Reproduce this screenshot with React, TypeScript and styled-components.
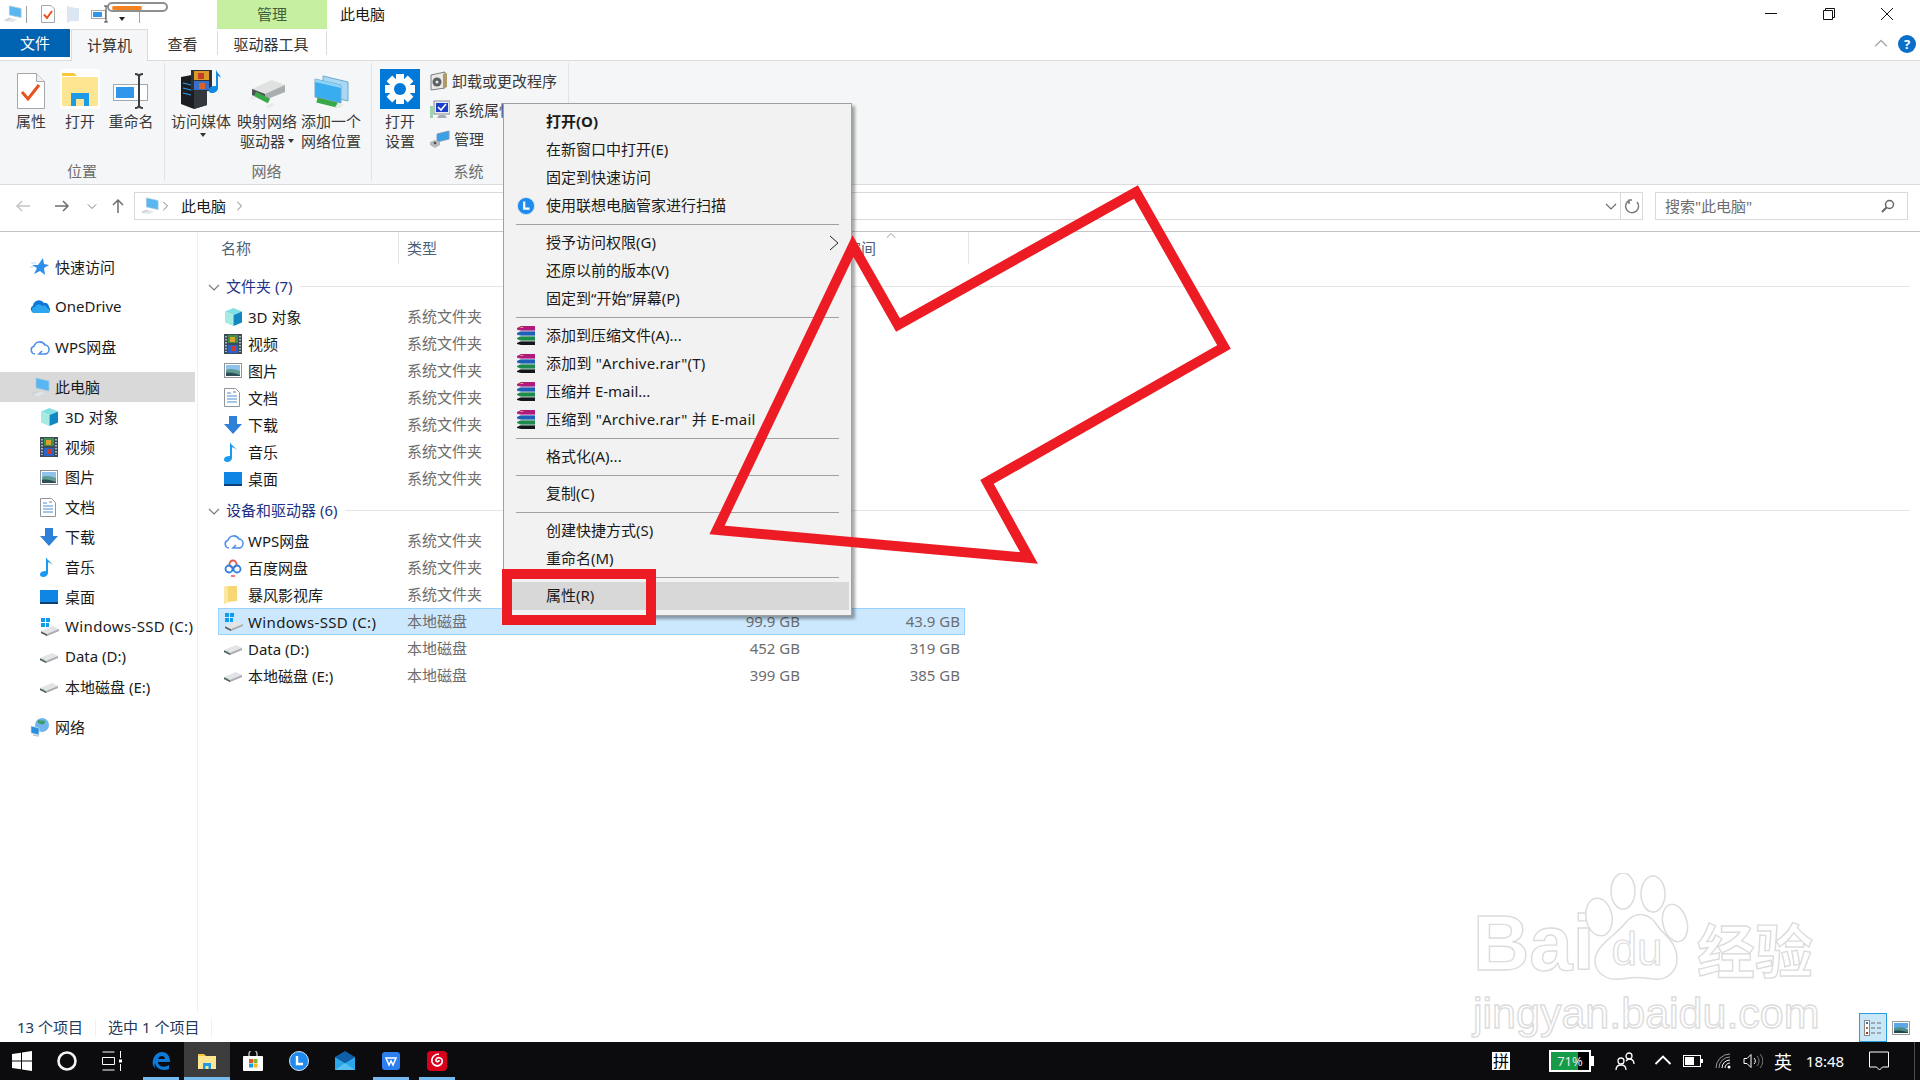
import React from "react";
import styled, { createGlobalStyle } from "styled-components";

const GlobalStyle = createGlobalStyle`
  html, body {
    margin: 0;
    padding: 0;
    width: 1920px;
    height: 1080px;
    overflow: hidden;
    background: #fff;
  }
  * {
    box-sizing: border-box;
  }
`;

const IconPc = ({ size = 20 }: { size?: number }) => (
  <svg width={size} height={size} viewBox="0 0 20 20">
    <path d="M6 1l13 3v10L6 11z" fill="#58b6f0" stroke="#a9c8dc" strokeWidth="0.8" />
    <path d="M0 17l6-3 3 1-6 3z" fill="#cdd2d6" />
    <path d="M3 18l6-3 6 1-6 3z" fill="#e2e5e8" />
  </svg>
);

const IconStar = () => (
  <svg width="20" height="20" viewBox="0 0 20 20">
    <path d="M13 1l1 6 5 1-5 3 1 7-5-4-6 3 3-6-5-3h6z" fill="#2f8fe8" />
    <path d="M1 6h5M0 10h4" stroke="#b7d9f5" strokeWidth="1" />
  </svg>
);

const IconOneDrive = () => (
  <svg width="20" height="14" viewBox="0 0 20 14">
    <path d="M4 13a4 4 0 01-1-7.500A6 6 0 0114 3a4 4 0 015 4 3.500 3.500 0 01-2 6z" fill="#0f78d4" />
    <path d="M5 13a3 3 0 010-6 4 4 0 017-1 3.500 3.500 0 015 2 3 3 0 012 5z" fill="#2ba6ef" />
  </svg>
);

const IconCloud = () => (
  <svg width="20" height="16" viewBox="0 0 20 16">
    <path d="M5 15a4 4 0 01-1-7.800A6 6 0 0115 6a4.500 4.500 0 01-1 9H9l3-3" fill="none" stroke="#4f8fe8" strokeWidth="1.600" />
  </svg>
);

const IconCube = () => (
  <svg width="19" height="20" viewBox="0 0 19 20">
    <path d="M9.500 1L18 4.500 9.500 8 1 4.500z" fill="#7fe0e4" />
    <path d="M1 4.500L9.500 8v11L1 15.500z" fill="#a5ebe2" />
    <path d="M18 4.500L9.500 8v11l8.500-3.500z" fill="#1188c4" />
  </svg>
);

const IconFilm = () => (
  <svg width="18" height="20" viewBox="0 0 18 20">
    <rect width="18" height="20" fill="#3d4a5a" />
    <rect x="4" y="1" width="10" height="8" fill="#3f8f4a" />
    <rect x="6" y="3" width="5" height="5" fill="#d8a22c" />
    <rect x="4" y="11" width="10" height="8" fill="#2a64c8" />
    <rect x="7" y="12" width="5" height="5" fill="#cc3a2a" />
    <path d="M2 2v16M16 2v16" stroke="#cfd6dc" strokeWidth="1.500" strokeDasharray="1.500 1.500" />
  </svg>
);

const IconPicture = () => (
  <svg width="18" height="15" viewBox="0 0 18 15">
    <rect x="0.500" y="0.500" width="17" height="14" fill="#fff" stroke="#8e949a" />
    <rect x="2" y="2" width="14" height="6" fill="#8ec4ec" />
    <path d="M2 7c4-2 9-1 14 1v5H2z" fill="#5f9c92" />
    <path d="M2 10c4-1 9 0 14 2v1H2z" fill="#2e4f58" />
  </svg>
);

const IconDoc = () => (
  <svg width="16" height="19" viewBox="0 0 16 19">
    <path d="M.500.500h11l4 4v14H.500z" fill="#fff" stroke="#8e949a" />
    <path d="M3 5h4M3 8h10M3 11h10M3 14h10" stroke="#4a90d0" strokeWidth="1.200" />
    <path d="M9 4h3" stroke="#8e949a" strokeWidth="1.200" />
  </svg>
);

const IconDownload = () => (
  <svg width="18" height="18" viewBox="0 0 18 18">
    <path d="M5 0h8v8h5l-9 10L0 8h5z" fill="#2f80d8" />
  </svg>
);

const IconMusic = () => (
  <svg width="14" height="20" viewBox="0 0 14 20">
    <path d="M6 0c1 4 7 5 7 10 0-3-3-4-5-5v11c0 2-2 4-5 4-2 0-3-1-3-2.500C0 15 3 14 6 14z" fill="#1b9bf0" />
  </svg>
);

const IconDesktop = () => (
  <svg width="18" height="14" viewBox="0 0 18 14">
    <rect width="18" height="13" fill="#0f85e4" />
    <rect y="12" width="18" height="2" fill="#0a3f78" />
  </svg>
);

const IconDrive = () => (
  <svg width="18" height="12" viewBox="0 0 18 12">
    <path d="M0 7l12-5 6 3v2L6 12 0 9z" fill="#e2e4e6" />
    <path d="M0 7l6 3 12-5v2L6 12 0 9z" fill="#a9adb1" />
    <path d="M0 7.500l6 3v1.500L0 9z" fill="#4f5458" />
    <rect x="2" y="8.500" width="2" height="1" fill="#3fa34d" />
  </svg>
);

const IconWinDrive = () => (
  <svg width="20" height="20" viewBox="0 0 20 20">
    <path d="M1 1h4v4H1zM6 1h4v4H6zM1 6h4v4H1zM6 6h3v4H6z" fill="#0f9bf0" />
    <path d="M1 14l12-5 6 3v2L7 19l-6-3z" fill="#e2e4e6" />
    <path d="M1 14l6 3 12-5v2L7 19l-6-3z" fill="#a9adb1" />
    <path d="M1 14.500l6 3V19l-6-3z" fill="#4f5458" />
  </svg>
);

const IconGlobe = () => (
  <svg width="20" height="20" viewBox="0 0 20 20">
    <circle cx="12" cy="8" r="7" fill="#6fb6ea" />
    <path d="M8 3c3 1 5 0 7 1 1 3-3 4-5 3S7 5 8 3z" fill="#3f9a6e" />
    <path d="M1 9l8 2v7l-8-2z" fill="#2a8fe0" stroke="#cfe3f2" strokeWidth="0.700" />
    <path d="M3 18l6 1" stroke="#c4c8cc" strokeWidth="1.500" />
  </svg>
);

const IconBaidu = () => (
  <svg width="18" height="20" viewBox="0 0 18 20">
    <circle cx="9" cy="6" r="3.500" fill="none" stroke="#e6544f" strokeWidth="1.800" />
    <circle cx="5" cy="11" r="3.500" fill="none" stroke="#2b7fe0" strokeWidth="1.800" />
    <circle cx="13" cy="11" r="3.500" fill="none" stroke="#2b7fe0" strokeWidth="1.800" />
    <path d="M7 18h4" stroke="#e6544f" strokeWidth="1.500" />
  </svg>
);

const IconFolder = () => (
  <svg width="14" height="18" viewBox="0 0 14 18">
    <path d="M0 1l6-1h7v15l-9 1-4 2z" fill="#f7d774" />
    <path d="M0 1l4 1v14l-4 2z" fill="#fbe7a4" />
  </svg>
);

const IconWinrar = () => (
  <svg width="20" height="20" viewBox="0 0 20 20">
    <path d="M1 2l4-2h14v5H5L1 4z" fill="#b01a7c" />
    <path d="M3 1l3 1 2-1z" fill="#e8c850" />
    <path d="M1 7l4-2h14v5H5L1 9z" fill="#1f5fb8" />
    <path d="M1 12l4-2h14v5H5l-4-2z" fill="#1e8a4c" />
    <path d="M1 17l4-2h14v4H5l-4-1z" fill="#14161a" />
    <path d="M1 4l4 1h14M1 9l4 1h14M1 14l4 1h14" stroke="#e8ecf0" strokeWidth="0.800" fill="none" />
  </svg>
);

const IconLenovo = ({ size = 18 }: { size?: number }) => (
  <svg width={size} height={size} viewBox="0 0 20 20">
    <circle cx="10" cy="10" r="9.500" fill="#1f8bec" stroke="#d5e6f5" />
    <path d="M8 5v8h6" fill="none" stroke="#fff" strokeWidth="2.400" />
  </svg>
);

const IconRibbonProps = () => (
  <svg width="28" height="36" viewBox="0 0 28 36">
    <path d="M.500.500h19l8 8v27H.500z" fill="#fff" stroke="#a4a8ac" />
    <path d="M19.500.500v8h8" fill="#f0f0f0" stroke="#a4a8ac" />
    <path d="M5 19l6 7 11-14" fill="none" stroke="#e8511c" strokeWidth="3" />
  </svg>
);

const IconRibbonOpen = () => (
  <svg width="40" height="40" viewBox="0 0 40 40">
    <rect width="40" height="40" fill="#fff" />
    <path d="M2 4h12l3 3h-15z" fill="#f8c83c" />
    <rect x="2" y="8" width="36" height="29" fill="#fde592" />
    <path d="M11 37V24h18v13h-5v-7h-8v7z" fill="#1e9be8" />
    <rect x="11" y="24" width="18" height="3" fill="#1e9be8" />
  </svg>
);

const IconRibbonRename = () => (
  <svg width="36" height="36" viewBox="0 0 36 36">
    <rect x="0.500" y="11.500" width="34" height="16" fill="#fff" stroke="#a4a8ac" />
    <rect x="3" y="14" width="18" height="11" fill="#2f96ec" />
    <path d="M22 1c2 0 4 1 4 3v28c0 2-2 3-4 3M30 1c-2 0-4 1-4 3v28c0 2 2 3 4 3" fill="none" stroke="#3c3f42" strokeWidth="2" />
  </svg>
);

const IconRibbonMedia = () => (
  <svg width="42" height="40" viewBox="0 0 42 40">
    <path d="M1 8l16-3 10 6v25l-13 4-13-5z" fill="#1a1d22" />
    <path d="M14 12l13-1v25l-13 4z" fill="#33383f" />
    <path d="M3 14l8 2M3 19l8 2M3 24l8 2" stroke="#2f9be8" strokeWidth="1.200" />
    <rect x="11" y="1" width="21" height="21" fill="#2d3238" />
    <rect x="14" y="2" width="15" height="9" fill="#d89b2a" />
    <rect x="14" y="12" width="15" height="9" fill="#3a70c8" />
    <rect x="18" y="4" width="6" height="6" fill="#c83a2a" />
    <rect x="19" y="14" width="6" height="6" fill="#d8622a" />
    <path d="M36 0c0 4 5 5 5 10 0-2-2-3-3-3v12c0 3-3 5-6 5s-4-2-3-4c1-3 4-3 7-3z" fill="#0f8ce0" />
  </svg>
);

const IconRibbonDrive = () => (
  <svg width="40" height="30" viewBox="0 0 40 30">
    <path d="M5 10l20-9 13 5v7L18 21 5 16z" fill="#dfe2e0" />
    <path d="M5 10l13 5 20-9v7L18 21 5 16z" fill="#a9aeb0" />
    <path d="M5 10l13 5v6L5 16z" fill="#4c5154" />
    <path d="M8 15l14 7" stroke="#39a84a" strokeWidth="5" />
    <path d="M25 24l3 2-6 3-3-2z" fill="#e8ece8" />
    <path d="M2 19l3 2 5-2-3-2z" fill="#e8ece8" />
  </svg>
);

const IconRibbonNetwork = () => (
  <svg width="36" height="34" viewBox="0 0 36 34">
    <path d="M10 1l25 6v19l-25-6z" fill="#a8d8f4" stroke="#6ea8cc" />
    <path d="M2 4l26 6v18L2 22z" fill="#38aef0" stroke="#6ea8cc" />
    <path d="M2 4l26 6v3L2 7z" fill="#8fd4f8" />
    <path d="M4 25l20 5" stroke="#39a84a" strokeWidth="5" />
    <path d="M25 28l6 2-4 3-5-1z" fill="#e6eae6" />
  </svg>
);

const IconRibbonGear = () => (
  <svg width="40" height="40" viewBox="0 0 40 40">
    <rect width="40" height="40" fill="#0078d7" />
    <circle cx="20" cy="20" r="11" fill="#fff" />
    {[0, 45, 90, 135].map((a) => (
      <rect key={a} x="16" y="5" width="8" height="30" fill="#fff" transform={`rotate(${a} 20 20)`} />
    ))}
    <circle cx="20" cy="20" r="6" fill="#0078d7" />
  </svg>
);

const IconSmallUninstall = () => (
  <svg width="18" height="20" viewBox="0 0 18 20">
    <path d="M1 4l14-3v16L1 19z" fill="#e8e8e4" stroke="#7a7e80" />
    <circle cx="7" cy="11" r="4.500" fill="#5a6064" />
    <circle cx="7" cy="11" r="1.500" fill="#e8e8e4" />
    <path d="M13 3l4-1v14l-4 1z" fill="#b09a68" />
  </svg>
);

const IconSmallSysProps = () => (
  <svg width="20" height="20" viewBox="0 0 20 20">
    <rect x="0" y="6" width="3" height="12" fill="#9fd4a8" />
    <rect x="4" y="1" width="16" height="13" fill="#e8eaec" stroke="#8a9298" />
    <rect x="6" y="3" width="12" height="9" fill="#1c3fc8" />
    <path d="M8 7l3 3 5-6" fill="none" stroke="#fff" strokeWidth="1.600" />
    <path d="M9 15h6l2 3H7z" fill="#a8aeb4" />
  </svg>
);

const IconSmallManage = () => (
  <svg width="20" height="18" viewBox="0 0 20 18">
    <path d="M7 4l12-3v8L7 12z" fill="#38a0e8" stroke="#7a9cb8" />
    <path d="M0 12l5-2 5 2v3l-5 3-5-3z" fill="#b6babc" />
    <circle cx="5" cy="13" r="1.300" fill="#4a4e50" />
  </svg>
);

const Chevron = ({ dir, color = "#7a7a7a", size = 12 }: { dir: "up" | "down" | "right"; color?: string; size?: number }) => {
  const paths = { up: "M1 8l5-5 5 5", down: "M1 4l5 5 5-5", right: "M4 1l5 5-5 5" };
  return (
    <svg width={size} height={size} viewBox="0 0 12 12">
      <path d={paths[dir]} fill="none" stroke={color} strokeWidth="1.200" />
    </svg>
  );
};

const Arrow = ({ dir, color }: { dir: "left" | "right" | "up"; color: string }) => {
  const paths = {
    left: "M15 8H2M7 3L2 8l5 5",
    right: "M1 8h13M9 3l5 5-5 5",
    up: "M8 15V2M3 7l5-5 5 5",
  };
  return (
    <svg width="16" height="16" viewBox="0 0 16 16">
      <path d={paths[dir]} fill="none" stroke={color} strokeWidth="1.500" />
    </svg>
  );
};

const TaskIcons: Record<string, React.ReactNode> = {
  start: (
    <svg width="20" height="20" viewBox="0 0 20 20">
      <path d="M0 3l9-1.300V9.500H0zM10 1.500L20 0v9.500H10zM0 10.500h9v7.800L0 17zM10 10.500h10V20l-10-1.500z" fill="#fff" />
    </svg>
  ),
  cortana: (
    <svg width="20" height="20" viewBox="0 0 20 20">
      <circle cx="10" cy="10" r="8.500" fill="none" stroke="#f4f4f4" strokeWidth="2.600" />
    </svg>
  ),
  taskview: (
    <svg width="20" height="20" viewBox="0 0 20 20">
      <path d="M0.500 1h12M0.500 19h12M0.500 6.500h12v7h-12zM18.500 0v7M18.500 13v7" fill="none" stroke="#fff" strokeWidth="1" />
      <rect x="17" y="8.500" width="3" height="3" fill="#fff" />
    </svg>
  ),
  edge: (
    <svg width="18" height="18" viewBox="0 0 18 18">
      <path d="M1 8C2 3 6 0 10 0c5 0 8 4 8 10H6c0 5 7 6 11 3v4c-5 2-13 1-14-6-1 3 0 5 1 6-3-2-4-5-3-9zM6 7h7c0-4-6-4-7 0z" fill="#0c7ad8" />
    </svg>
  ),
  explorer: (
    <svg width="18" height="18" viewBox="0 0 18 18">
      <path d="M0 2h6l2 2H0z" fill="#f8c83c" />
      <rect y="4" width="18" height="13" fill="#fde592" />
      <path d="M5 17v-6h8v6h-2.500v-3h-3v3z" fill="#1e9be8" />
    </svg>
  ),
  store: (
    <svg width="20" height="20" viewBox="0 0 20 20">
      <path d="M6 5V3a4 4 0 018 0v2" fill="none" stroke="#b8b8b8" strokeWidth="1.500" />
      <rect y="5" width="20" height="15" rx="1" fill="#fff" />
      <rect x="6" y="8" width="4" height="4" fill="#e8532a" />
      <rect x="10.500" y="8" width="4" height="4" fill="#7db92a" />
      <rect x="6" y="12.500" width="4" height="4" fill="#10a0e8" />
      <rect x="10.500" y="12.500" width="4" height="4" fill="#f8b818" />
    </svg>
  ),
  clock: <IconLenovo size={20} />,
  mail: (
    <svg width="20" height="20" viewBox="0 0 20 20">
      <path d="M0 6l10-6 10 6-10 6z" fill="#0f5ea8" />
      <path d="M0 6l10 6 10-6v13H0z" fill="#2ba6ea" />
      <path d="M0 19l10-7 10 7z" fill="#58c0f0" />
    </svg>
  ),
  wps: (
    <svg width="18" height="18" viewBox="0 0 18 18">
      <rect width="18" height="18" rx="3" fill="#2b7ff0" />
      <path d="M4 6h10l-3 7-2-4-2 4z" fill="none" stroke="#fff" strokeWidth="1.500" />
    </svg>
  ),
  netease: (
    <svg width="20" height="20" viewBox="0 0 20 20">
      <rect width="20" height="20" rx="4" fill="#d8001a" />
      <path d="M12 3c-5 0-8 4-7 8 1 3 5 5 8 3 3-2 3-6 0-7-2-1-5 1-4 3 1 1 3 1 3-1" fill="none" stroke="#fff" strokeWidth="1.700" />
    </svg>
  ),
};

interface NavItem {
  label: string;
  icon: React.ReactNode;
  level: 1 | 2;
  selected?: boolean;
  spaced?: boolean;
  wide?: boolean;
}

const NAV_ITEMS: NavItem[] = [
  { label: "快速访问", icon: <IconStar />, level: 1 },
  { label: "OneDrive", icon: <IconOneDrive />, level: 1, spaced: true },
  { label: "WPS网盘", icon: <IconCloud />, level: 1, spaced: true },
  { label: "此电脑", icon: <IconPc />, level: 1, selected: true, spaced: true },
  { label: "3D 对象", icon: <IconCube />, level: 2 },
  { label: "视频", icon: <IconFilm />, level: 2 },
  { label: "图片", icon: <IconPicture />, level: 2 },
  { label: "文档", icon: <IconDoc />, level: 2 },
  { label: "下载", icon: <IconDownload />, level: 2 },
  { label: "音乐", icon: <IconMusic />, level: 2 },
  { label: "桌面", icon: <IconDesktop />, level: 2 },
  { label: "Windows-SSD (C:)", icon: <IconWinDrive />, level: 2, wide: true },
  { label: "Data (D:)", icon: <IconDrive />, level: 2 },
  { label: "本地磁盘 (E:)", icon: <IconDrive />, level: 2 },
  { label: "网络", icon: <IconGlobe />, level: 1, spaced: true },
];

interface FileRowData {
  name: string;
  icon: React.ReactNode;
  type: string;
  total?: string;
  free?: string;
  selected?: boolean;
  wide?: boolean;
}

const FOLDERS: FileRowData[] = [
  { name: "3D 对象", icon: <IconCube />, type: "系统文件夹" },
  { name: "视频", icon: <IconFilm />, type: "系统文件夹" },
  { name: "图片", icon: <IconPicture />, type: "系统文件夹" },
  { name: "文档", icon: <IconDoc />, type: "系统文件夹" },
  { name: "下载", icon: <IconDownload />, type: "系统文件夹" },
  { name: "音乐", icon: <IconMusic />, type: "系统文件夹" },
  { name: "桌面", icon: <IconDesktop />, type: "系统文件夹" },
];

const DEVICES: FileRowData[] = [
  { name: "WPS网盘", icon: <IconCloud />, type: "系统文件夹" },
  { name: "百度网盘", icon: <IconBaidu />, type: "系统文件夹" },
  { name: "暴风影视库", icon: <IconFolder />, type: "系统文件夹" },
  { name: "Windows-SSD (C:)", icon: <IconWinDrive />, type: "本地磁盘", total: "99.9 GB", free: "43.9 GB", selected: true, wide: true },
  { name: "Data (D:)", icon: <IconDrive />, type: "本地磁盘", total: "452 GB", free: "319 GB" },
  { name: "本地磁盘 (E:)", icon: <IconDrive />, type: "本地磁盘", total: "399 GB", free: "385 GB" },
];

type MenuEntry = { label: string; icon?: React.ReactNode; bold?: boolean; sub?: boolean; active?: boolean; wide?: boolean } | "sep";

const MENU: MenuEntry[] = [
  { label: "打开(O)", bold: true },
  { label: "在新窗口中打开(E)" },
  { label: "固定到快速访问" },
  { label: "使用联想电脑管家进行扫描", icon: <IconLenovo /> },
  "sep",
  { label: "授予访问权限(G)", sub: true },
  { label: "还原以前的版本(V)" },
  { label: "固定到“开始”屏幕(P)" },
  "sep",
  { label: "添加到压缩文件(A)...", icon: <IconWinrar /> },
  { label: "添加到 \"Archive.rar\"(T)", icon: <IconWinrar />, wide: true },
  { label: "压缩并 E-mail...", icon: <IconWinrar /> },
  { label: "压缩到 \"Archive.rar\" 并 E-mail", icon: <IconWinrar />, wide: true },
  "sep",
  { label: "格式化(A)..." },
  "sep",
  { label: "复制(C)" },
  "sep",
  { label: "创建快捷方式(S)" },
  { label: "重命名(M)" },
  "sep",
  { label: "属性(R)", active: true },
];

const TASKS = [
  { id: "start", w: 44 },
  { id: "cortana", w: 46 },
  { id: "taskview", w: 44 },
  { id: "edge", w: 46, ml: 4, running: true },
  { id: "explorer", w: 46, running: true, current: true },
  { id: "store", w: 46 },
  { id: "clock", w: 46 },
  { id: "mail", w: 46 },
  { id: "wps", w: 46, running: true },
  { id: "netease", w: 46, running: true },
];

function FileRow({ row }: { row: FileRowData }) {
  return (
    <Row $selected={row.selected}>
      <RowName $wide={row.wide}>
        <RowIcon>{row.icon}</RowIcon>
        {row.name}
      </RowName>
      <RowMuted>{row.type}</RowMuted>
      <RowNumber>{row.total}</RowNumber>
      <RowNumber>{row.free}</RowNumber>
    </Row>
  );
}

function App() {
  return (
    <Page>
      <GlobalStyle />
      <TitleBar>
        <QuickAccess>
          <IconPc size={18} />
          <QatDivider />
          <QatIcon $ml={14}>
            <svg width="14" height="18" viewBox="0 0 28 36">
              <path d="M1 1h19l7 7v27H1z" fill="#fff" stroke="#a4a8ac" strokeWidth="2" />
              <path d="M6 19l6 7 10-14" fill="none" stroke="#e8511c" strokeWidth="4" />
            </svg>
          </QatIcon>
          <QatIcon $ml={12}>
            <svg width="12" height="18" viewBox="0 0 12 18">
              <path d="M0 1l8 2h4v13H4l-4 2z" fill="#dbe6f2" />
            </svg>
          </QatIcon>
          <QatIcon $ml={12}>
            <svg width="18" height="18" viewBox="0 0 18 18">
              <rect x="0.500" y="5.500" width="14" height="8" fill="#fff" stroke="#a4a8ac" />
              <rect x="2" y="7" width="9" height="5" fill="#2f96ec" />
              <path d="M15 1v16M13 1h4M13 17h4" stroke="#3c3f42" fill="none" />
            </svg>
          </QatIcon>
          <QatCaret />
          <QatDivider $ml={14} />
        </QuickAccess>
        <ManageTab>管理</ManageTab>
        <WindowTitle>此电脑</WindowTitle>
        <WindowControls>
          <WindowButton>
            <svg width="14" height="14" viewBox="0 0 14 14">
              <path d="M1 6.500h12" stroke="#111" />
            </svg>
          </WindowButton>
          <WindowButton>
            <svg width="14" height="14" viewBox="0 0 14 14">
              <path d="M1.500 3.500h9v9h-9zM3.500 3.500v-2h9v9h-2" fill="none" stroke="#111" />
            </svg>
          </WindowButton>
          <WindowButton>
            <svg width="14" height="14" viewBox="0 0 14 14">
              <path d="M1 1l12 12M13 1L1 13" stroke="#111" />
            </svg>
          </WindowButton>
        </WindowControls>
      </TitleBar>

      <TabRow>
        <FileTab>文件</FileTab>
        <ActiveTab>计算机</ActiveTab>
        <PlainTab>查看</PlainTab>
        <ToolTab>驱动器工具</ToolTab>
        <TabRight>
          <Chevron dir="up" color="#a8a8a8" size={14} />
          <HelpDot>?</HelpDot>
        </TabRight>
      </TabRow>

      <Ribbon>
        <RibbonGroup $w={165} $pl={6}>
          <GroupBody>
            <BigButton $w={50}>
              <BigIcon><IconRibbonProps /></BigIcon>
              <BigLabel>属性</BigLabel>
            </BigButton>
            <BigButton $w={48}>
              <BigIcon><IconRibbonOpen /></BigIcon>
              <BigLabel>打开</BigLabel>
            </BigButton>
            <BigButton $w={54}>
              <BigIcon><IconRibbonRename /></BigIcon>
              <BigLabel>重命名</BigLabel>
            </BigButton>
          </GroupBody>
          <GroupLabel>位置</GroupLabel>
        </RibbonGroup>
        <RibbonGroup $w={207} $pl={3}>
          <GroupBody>
            <BigButton $w={66}>
              <BigIcon><IconRibbonMedia /></BigIcon>
              <BigLabel>访问媒体</BigLabel>
              <CaretLine><DropCaret $ml={4} /></CaretLine>
            </BigButton>
            <BigButton $w={66}>
              <BigIcon><IconRibbonDrive /></BigIcon>
              <BigLabel>映射网络</BigLabel>
              <BigLabel>驱动器<DropCaret $ml={3} /></BigLabel>
            </BigButton>
            <BigButton $w={62}>
              <BigIcon><IconRibbonNetwork /></BigIcon>
              <BigLabel>添加一个</BigLabel>
              <BigLabel>网络位置</BigLabel>
            </BigButton>
          </GroupBody>
          <GroupLabel>网络</GroupLabel>
        </RibbonGroup>
        <RibbonGroup $w={197} $pl={3}>
          <GroupBody>
            <BigButton $w={50}>
              <BigIcon><IconRibbonGear /></BigIcon>
              <BigLabel>打开</BigLabel>
              <BigLabel>设置</BigLabel>
            </BigButton>
            <SmallColumn>
              <SmallButton><IconSmallUninstall />卸载或更改程序</SmallButton>
              <SmallButton><IconSmallSysProps />系统属性</SmallButton>
              <SmallButton><IconSmallManage />管理</SmallButton>
            </SmallColumn>
          </GroupBody>
          <GroupLabel>系统</GroupLabel>
        </RibbonGroup>
      </Ribbon>

      <AddressBar>
        <AddressNav $w={30} $ml={8}><Arrow dir="left" color="#c4c4c4" /></AddressNav>
        <AddressNav $w={48}><Arrow dir="right" color="#6d6d6d" /></AddressNav>
        <AddressNav $w={12}><Chevron dir="down" size={10} /></AddressNav>
        <AddressNav $w={28} $ml={6}><Arrow dir="up" color="#6d6d6d" /></AddressNav>
        <AddressBox>
          <IconPc size={18} />
          <Crumb><Chevron dir="right" size={10} /></Crumb>
          <CrumbText>此电脑</CrumbText>
          <Crumb><Chevron dir="right" size={10} /></Crumb>
          <AddressTools>
            <Chevron dir="down" color="#6d6d6d" size={12} />
            <RefreshCell>
              <svg width="16" height="16" viewBox="0 0 16 16">
                <path d="M5 2.500a6.500 6.500 0 108 1.500M8 2H4.500M5 2.500V6" fill="none" stroke="#7a7a7a" strokeWidth="1.500" />
              </svg>
            </RefreshCell>
          </AddressTools>
        </AddressBox>
        <SearchBox>
          <SearchText>搜索"此电脑"</SearchText>
          <SearchGlass>
            <svg width="14" height="14" viewBox="0 0 14 14">
              <circle cx="8.500" cy="5.500" r="4" fill="none" stroke="#666" strokeWidth="1.500" />
              <path d="M5.500 8.500L1 13" stroke="#666" strokeWidth="2" />
            </svg>
          </SearchGlass>
        </SearchBox>
      </AddressBar>

      <Main>
        <NavPane>
          {NAV_ITEMS.map((item) => (
            <NavRow key={item.label + item.level} $level={item.level} $selected={item.selected} $spaced={item.spaced} $wide={item.wide}>
              <NavIcon>{item.icon}</NavIcon>
              <NavLabel>{item.label}</NavLabel>
            </NavRow>
          ))}
        </NavPane>
        <ContentPane>
          <HeaderRow>
            <HeaderCell $w={181} $divided>名称</HeaderCell>
            <HeaderCell $w={100} $pl={8}>类型</HeaderCell>
            <HeaderCell $w={200} $pl={8} />
            <HeaderCell $w={270} $align="right" $pr={92} $divided>
              可用空间
              <SortCaret><Chevron dir="up" size={10} color="#9a9a9a" /></SortCaret>
            </HeaderCell>
          </HeaderRow>
          <Group $mt={6}>
            <GroupHeader>
              <Chevron dir="down" color="#7a7a7a" />
              <GroupTitle>文件夹 (7)</GroupTitle>
              <GroupLine />
            </GroupHeader>
            {FOLDERS.map((row) => <FileRow key={row.name} row={row} />)}
          </Group>
          <Group $mt={2}>
            <GroupHeader>
              <Chevron dir="down" color="#7a7a7a" />
              <GroupTitle>设备和驱动器 (6)</GroupTitle>
              <GroupLine />
            </GroupHeader>
            {DEVICES.map((row) => <FileRow key={row.name} row={row} />)}
          </Group>
        </ContentPane>
      </Main>

      <StatusBar>
        <StatusItem>13 个项目</StatusItem>
        <StatusItem>选中 1 个项目</StatusItem>
        <ViewButtons>
          <ViewButton $active>
            <svg width="18" height="16" viewBox="0 0 18 16">
              <rect x="0.500" y="0.500" width="5" height="15" fill="#fff" stroke="#8a8a8a" />
              <rect x="2" y="2" width="2" height="2" fill="#3a6aa8" />
              <rect x="2" y="7" width="2" height="2" fill="#b07a20" />
              <rect x="2" y="12" width="2" height="2" fill="#b03020" />
              <path d="M7 3h4M13 3h4M7 8h4M13 8h4M7 13h4M13 13h4" stroke="#6d6d6d" />
            </svg>
          </ViewButton>
          <ViewButton>
            <svg width="18" height="14" viewBox="0 0 18 14">
              <rect x="0.500" y="0.500" width="17" height="13" fill="#fff" stroke="#9a9a9a" />
              <rect x="2" y="2" width="14" height="5" fill="#5aa8e8" />
              <path d="M2 7c4-1 9-1 14 1v4H2z" fill="#4f8f88" />
              <path d="M2 10c4-1 9 0 14 1v1H2z" fill="#23464f" />
            </svg>
          </ViewButton>
        </ViewButtons>
      </StatusBar>

      <Taskbar>
        {TASKS.map((t) => (
          <TaskSlot key={t.id} $w={t.w} $ml={t.ml} $running={t.running} $current={t.current}>
            {TaskIcons[t.id]}
          </TaskSlot>
        ))}
        <Tray>
          <TraySlot $w={42}><ImeBox>拼</ImeBox></TraySlot>
          <TraySlot $w={48} $ml={24}>
            <BatteryMeter>
              <BatteryFill $pct={71} />
              <BatteryText>71%</BatteryText>
            </BatteryMeter>
          </TraySlot>
          <TraySlot $w={46} $ml={8}>
            <svg width="20" height="20" viewBox="0 0 20 20">
              <circle cx="14" cy="5" r="3" fill="none" stroke="#fff" strokeWidth="1.300" />
              <circle cx="6" cy="10" r="3" fill="none" stroke="#fff" strokeWidth="1.300" />
              <path d="M1 19c0-3 2-5 5-5s5 2 5 5M11 10c1-1 2-2 3-2 3 0 5 2 5 5" fill="none" stroke="#fff" strokeWidth="1.300" />
            </svg>
          </TraySlot>
          <TraySlot $w={30}><Chevron dir="up" color="#fff" size={18} /></TraySlot>
          <TraySlot $w={30}>
            <svg width="20" height="12" viewBox="0 0 20 12">
              <rect x="0.500" y="0.500" width="17" height="11" fill="none" stroke="#fff" />
              <rect x="2" y="2" width="9" height="8" fill="#fff" />
              <rect x="18" y="4" width="2" height="4" fill="#fff" />
            </svg>
          </TraySlot>
          <TraySlot $w={30}>
            <svg width="16" height="16" viewBox="0 0 16 16">
              <path d="M1 15a14 14 0 0114-14M4 15a11 11 0 0111-11" fill="none" stroke="#9a9a9a" />
              <path d="M7 15a8 8 0 018-8M10 15a5 5 0 015-5" fill="none" stroke="#fff" />
              <circle cx="14" cy="14" r="1.500" fill="#fff" />
            </svg>
          </TraySlot>
          <TraySlot $w={30}>
            <svg width="20" height="16" viewBox="0 0 20 16">
              <path d="M1 5.500h3l4-4v13l-4-4H1z" fill="none" stroke="#fff" />
              <path d="M11 5a4 4 0 010 6" fill="none" stroke="#fff" />
              <path d="M14 3a7 7 0 010 10M17 1a10 10 0 010 14" fill="none" stroke="#777" />
            </svg>
          </TraySlot>
          <TraySlot $w={30}><TrayText $size={18}>英</TrayText></TraySlot>
          <TraySlot $w={54}><TrayText $size={15}>18:48</TrayText></TraySlot>
          <TraySlot $w={54}>
            <svg width="20" height="20" viewBox="0 0 20 20">
              <path d="M.500 1h19v15h-6l-3 3-3-3h-7z" fill="none" stroke="#fff" />
            </svg>
          </TraySlot>
          <TrayEdge />
        </Tray>
      </Taskbar>

      <ContextMenu>
        {MENU.map((entry, i) =>
          entry === "sep" ? (
            <MenuSeparator key={i} />
          ) : (
            <MenuItem key={i} $bold={entry.bold} $active={entry.active}>
              <MenuIcon>{entry.icon}</MenuIcon>
              <MenuLabel $wide={entry.wide}>{entry.label}</MenuLabel>
              {entry.sub && (
                <MenuSub>
                  <svg width="10" height="16" viewBox="0 0 10 16">
                    <path d="M1 1l8 7-8 7" fill="none" stroke="#222" />
                  </svg>
                </MenuSub>
              )}
            </MenuItem>
          ),
        )}
      </ContextMenu>

      <Annotation width="1920" height="1080" viewBox="0 0 1920 1080">
        <polygon
          points="1136,192 1224,347 987,482 1029,558 717,530 853,246 898,325"
          fill="none"
          stroke="#ed1c24"
          strokeWidth="10"
          strokeMiterlimit="12"
        />
      </Annotation>
      <RedBox />
      <OrangePill>
        <OrangeBar />
      </OrangePill>

      <Watermark>
        <WatermarkTop>
          <WatermarkBig>Bai</WatermarkBig>
          <svg width="112" height="112" viewBox="0 0 112 112">
            <g fill="#fff" stroke="#dcdcdc" strokeWidth="1.500">
              <ellipse cx="14" cy="44" rx="13" ry="19" transform="rotate(-10 14 44)" />
              <ellipse cx="38" cy="18" rx="12" ry="18" />
              <ellipse cx="68" cy="21" rx="12" ry="18" />
              <ellipse cx="90" cy="50" rx="12" ry="19" transform="rotate(-15 90 50)" />
              <path d="M42 48c10-10 22-8 30 4 6 10 20 16 20 34 0 14-12 22-24 20-10-2-22-2-32 0-14 2-26-6-26-18 0-16 20-24 32-40z" />
            </g>
            <WatermarkDu x="52" y="92" textAnchor="middle">du</WatermarkDu>
          </svg>
          <WatermarkCn>经验</WatermarkCn>
        </WatermarkTop>
        <WatermarkUrl>jingyan.baidu.com</WatermarkUrl>
      </Watermark>
    </Page>
  );
}

export default App;

const Page = styled.div`
  position: relative;
  width: 1920px;
  height: 1080px;
  display: flex;
  flex-direction: column;
  overflow: hidden;
  background: #fff;
  font-family: "Noto Sans", "Noto Sans CJK SC", sans-serif;
  font-size: 15px;
  color: #1a1a1a;
`;

const TitleBar = styled.div`
  height: 29px;
  display: flex;
  align-items: stretch;
  flex-shrink: 0;
`;

const QuickAccess = styled.div`
  width: 217px;
  padding: 5px 0 0 4px;
  display: flex;
  align-items: flex-start;
`;

const QatDivider = styled.div<{ $ml?: number }>`
  width: 1px;
  height: 17px;
  margin: 1px 0 0 ${(p) => p.$ml ?? 4}px;
  background: #a0a0a0;
`;

const QatIcon = styled.div<{ $ml: number }>`
  margin-left: ${(p) => p.$ml}px;
  height: 18px;
`;

const QatCaret = styled.div`
  width: 0;
  height: 0;
  margin: 12px 0 0 10px;
  border-left: 3px solid transparent;
  border-right: 3px solid transparent;
  border-top: 4px solid #222;
`;

const ManageTab = styled.div`
  width: 110px;
  background: #c6f09f;
  color: #3f5f3a;
  display: flex;
  align-items: center;
  justify-content: center;
  padding-bottom: 2px;
`;

const WindowTitle = styled.div`
  margin-left: 13px;
  line-height: 29px;
`;

const WindowControls = styled.div`
  margin-left: auto;
  display: flex;
  padding: 7px 26px 0 0;
  gap: 44px;
`;

const WindowButton = styled.div`
  width: 14px;
  height: 14px;
  line-height: 0;
`;

const TabRow = styled.div`
  height: 32px;
  flex-shrink: 0;
  display: flex;
  align-items: stretch;
  border-bottom: 1px solid #dadbdc;
`;

const FileTab = styled.div`
  width: 70px;
  height: 28px;
  padding-bottom: 1px;
  background: #0063b1;
  color: #fff;
  display: flex;
  align-items: center;
  justify-content: center;
`;

const ActiveTab = styled.div`
  width: 77px;
  margin: 0 0 -1px 1px;
  padding-bottom: 3px;
  background: #f5f6f7;
  border: 1px solid #dadbdc;
  border-bottom: none;
  display: flex;
  align-items: center;
  justify-content: center;
  color: #333;
`;

const PlainTab = styled.div`
  width: 69px;
  padding-bottom: 3px;
  display: flex;
  align-items: center;
  justify-content: center;
  color: #333;
`;

const ToolTab = styled.div`
  width: 110px;
  border-left: 1px solid #dadbdc;
  border-right: 1px solid #dadbdc;
  height: 24px;
  margin-top: 2px;
  padding-right: 2px;
  display: flex;
  align-items: center;
  justify-content: center;
  color: #333;
`;

const TabRight = styled.div`
  margin-left: auto;
  display: flex;
  align-items: center;
  gap: 10px;
  padding: 0 4px 2px 0;
`;

const HelpDot = styled.div`
  width: 18px;
  height: 18px;
  border-radius: 50%;
  background: #0a6fc9;
  color: #fff;
  font-size: 13px;
  font-weight: 700;
  line-height: 18px;
  text-align: center;
`;

const Ribbon = styled.div`
  height: 124px;
  flex-shrink: 0;
  display: flex;
  background: #f5f6f7;
  border-bottom: 1px solid #dadbdc;
  color: #3a3a3a;
`;

const RibbonGroup = styled.div<{ $w: number; $pl: number }>`
  width: ${(p) => p.$w}px;
  padding-left: ${(p) => p.$pl}px;
  margin: 2px 0 3px;
  border-right: 1px solid #e2e3e4;
  display: flex;
  flex-direction: column;
`;

const GroupBody = styled.div`
  flex: 1;
  display: flex;
  align-items: flex-start;
`;

const GroupLabel = styled.div`
  height: 20px;
  line-height: 20px;
  text-align: center;
  color: #6d6d6d;
  margin-left: -6px;
`;

const BigButton = styled.div<{ $w: number }>`
  width: ${(p) => p.$w}px;
  display: flex;
  flex-direction: column;
  align-items: center;
`;

const BigIcon = styled.div`
  height: 48px;
  display: flex;
  align-items: flex-end;
  padding-bottom: 2px;
`;

const BigLabel = styled.div`
  height: 20px;
  line-height: 20px;
  white-space: nowrap;
  display: flex;
  align-items: center;
`;

const CaretLine = styled.div`
  height: 8px;
  display: flex;
  align-items: center;
`;

const DropCaret = styled.span<{ $ml?: number }>`
  display: inline-block;
  width: 0;
  height: 0;
  margin-left: ${(p) => p.$ml ?? 0}px;
  border-left: 3px solid transparent;
  border-right: 3px solid transparent;
  border-top: 4px solid #333;
`;

const SmallColumn = styled.div`
  margin: 3px 0 0 5px;
  display: flex;
  flex-direction: column;
`;

const SmallButton = styled.div`
  height: 29px;
  display: flex;
  align-items: center;
  gap: 4px;
  white-space: nowrap;
`;

const AddressBar = styled.div`
  height: 47px;
  flex-shrink: 0;
  padding-top: 7px;
  display: flex;
  align-items: flex-start;
  border-bottom: 1px solid #c4c4c4;
`;

const AddressNav = styled.div<{ $w: number; $ml?: number }>`
  width: ${(p) => p.$w}px;
  height: 28px;
  margin-left: ${(p) => p.$ml ?? 0}px;
  display: flex;
  align-items: center;
  justify-content: center;
`;

const AddressBox = styled.div`
  width: 1509px;
  height: 28px;
  margin-left: 2px;
  padding-left: 6px;
  border: 1px solid #d9d9d9;
  display: flex;
  align-items: center;
`;

const Crumb = styled.div`
  width: 12px;
  display: flex;
  justify-content: center;
`;

const CrumbText = styled.div`
  margin: 0 7px 2px 10px;
`;

const AddressTools = styled.div`
  margin-left: auto;
  height: 100%;
  display: flex;
  align-items: center;
  gap: 3px;
`;

const RefreshCell = styled.div`
  width: 22px;
  height: 100%;
  border-left: 1px solid #d9d9d9;
  display: flex;
  align-items: center;
  justify-content: center;
`;

const SearchBox = styled.div`
  width: 253px;
  height: 28px;
  margin-left: 12px;
  padding: 0 12px 0 9px;
  border: 1px solid #d9d9d9;
  color: #6d6d6d;
  display: flex;
  align-items: center;
  justify-content: space-between;
`;

const SearchText = styled.div`
  padding-bottom: 2px;
`;

const SearchGlass = styled.div`
  line-height: 0;
`;

const Main = styled.div`
  flex: 1;
  min-height: 0;
  display: flex;
`;

const NavPane = styled.div`
  width: 198px;
  padding: 20px 2px 0 0;
  border-right: 1px solid #f0f0f0;
  flex-shrink: 0;
`;

const NavRow = styled.div<{ $level: 1 | 2; $selected?: boolean; $spaced?: boolean; $wide?: boolean }>`
  height: 30px;
  margin-top: ${(p) => (p.$spaced ? 10 : 0)}px;
  padding-left: ${(p) => (p.$level === 1 ? 30 : 40)}px;
  background: ${(p) => (p.$selected ? "#d9d9d9" : "transparent")};
  display: flex;
  align-items: center;
  white-space: nowrap;
  letter-spacing: ${(p) => (p.$wide ? "0.35px" : "normal")};
`;

const NavIcon = styled.div`
  width: 25px;
  height: 20px;
  flex-shrink: 0;
  display: flex;
  align-items: center;
`;

const NavLabel = styled.div`
  padding-bottom: 2px;
`;

const ContentPane = styled.div`
  flex: 1;
  padding: 0 10px 0 20px;
  min-width: 0;
`;

const HeaderRow = styled.div`
  height: 32px;
  display: flex;
`;

const HeaderCell = styled.div<{ $w: number; $pl?: number; $pr?: number; $divided?: boolean; $align?: string }>`
  position: relative;
  width: ${(p) => p.$w}px;
  padding: 0 ${(p) => p.$pr ?? 0}px 0 ${(p) => p.$pl ?? 3}px;
  border-right: ${(p) => (p.$divided ? "1px solid #e5e5e5" : "none")};
  text-align: ${(p) => p.$align ?? "left"};
  line-height: 32px;
  color: #4c607a;
`;

const SortCaret = styled.div`
  position: absolute;
  right: 72px;
  top: -1px;
  line-height: 0;
`;

const Group = styled.div<{ $mt: number }>`
  margin-top: ${(p) => p.$mt}px;
`;

const GroupHeader = styled.div`
  height: 33px;
  margin-left: -10px;
  display: flex;
  align-items: center;
`;

const GroupTitle = styled.div`
  margin-left: 6px;
  padding-bottom: 3px;
  color: #1e3287;
`;

const GroupLine = styled.div`
  flex: 1;
  height: 1px;
  margin-left: 8px;
  background: #e5e5e5;
`;

const Row = styled.div<{ $selected?: boolean }>`
  width: 747px;
  height: 27px;
  padding-right: 5px;
  display: grid;
  grid-template-columns: 189px 100px 293px 160px;
  align-items: center;
  background: ${(p) => (p.$selected ? "#cce8ff" : "transparent")};
  box-shadow: ${(p) => (p.$selected ? "inset 0 0 0 1px #99d1ff" : "none")};
`;

const RowName = styled.div<{ $wide?: boolean }>`
  padding-left: 6px;
  display: flex;
  align-items: center;
  white-space: nowrap;
  line-height: 18px;
  letter-spacing: ${(p) => (p.$wide ? "0.35px" : "normal")};
`;

const RowIcon = styled.div`
  width: 24px;
  height: 20px;
  flex-shrink: 0;
  display: flex;
  align-items: center;
`;

const RowMuted = styled.div`
  color: #6d6d6d;
  padding-bottom: 2px;
`;

const RowNumber = styled.div`
  color: #6d6d6d;
  text-align: right;
  padding-bottom: 2px;
`;

const StatusBar = styled.div`
  height: 29px;
  flex-shrink: 0;
  padding-left: 17px;
  display: flex;
  align-items: center;
  color: #1e395b;
`;

const StatusItem = styled.div`
  padding: 0 12px 2px 0;
  margin-right: 12px;
  border-right: 1px solid #f0f0f0;
  line-height: 16px;
`;

const ViewButtons = styled.div`
  margin-left: auto;
  height: 100%;
  display: flex;
`;

const ViewButton = styled.div<{ $active?: boolean }>`
  width: ${(p) => (p.$active ? 28 : 33)}px;
  padding-right: ${(p) => (p.$active ? 0 : 5)}px;
  display: flex;
  align-items: center;
  justify-content: center;
  background: ${(p) => (p.$active ? "#c9e7f7" : "transparent")};
  box-shadow: ${(p) => (p.$active ? "inset 0 0 0 1px #26a0da" : "none")};
`;

const Taskbar = styled.div`
  height: 38px;
  flex-shrink: 0;
  display: flex;
  background: #0c0c0f;
`;

const TaskSlot = styled.div<{ $w: number; $ml?: number; $running?: boolean; $current?: boolean }>`
  position: relative;
  width: ${(p) => p.$w}px;
  margin-left: ${(p) => p.$ml ?? 0}px;
  background: ${(p) => (p.$current ? "#3c3c3c" : "transparent")};
  display: flex;
  align-items: center;
  justify-content: center;

  &::after {
    content: "";
    display: ${(p) => (p.$running ? "block" : "none")};
    position: absolute;
    left: ${(p) => (p.$current ? 0 : 5)}px;
    right: ${(p) => (p.$current ? 0 : 5)}px;
    bottom: 0;
    height: 3px;
    background: #76b9ed;
  }
`;

const Tray = styled.div`
  margin-left: auto;
  display: flex;
  align-items: stretch;
`;

const TraySlot = styled.div<{ $w: number; $ml?: number }>`
  width: ${(p) => p.$w}px;
  margin-left: ${(p) => p.$ml ?? 0}px;
  display: flex;
  align-items: center;
  justify-content: center;
`;

const ImeBox = styled.div`
  width: 18px;
  height: 18px;
  background: #fff;
  color: #000;
  font-size: 16px;
  line-height: 18px;
  text-align: center;
`;

const BatteryMeter = styled.div`
  position: relative;
  width: 42px;
  height: 22px;
  border: 2px solid #fff;
  background: #000;

  &::after {
    content: "";
    position: absolute;
    right: -5px;
    top: 4px;
    width: 3px;
    height: 10px;
    background: #fff;
  }
`;

const BatteryFill = styled.div<{ $pct: number }>`
  width: ${(p) => p.$pct}%;
  height: 100%;
  background: #169b48;
`;

const BatteryText = styled.div`
  position: absolute;
  inset: 0;
  color: #e8e8e8;
  font-size: 13px;
  line-height: 18px;
  text-align: center;
`;

const TrayText = styled.div<{ $size: number }>`
  color: #fff;
  font-size: ${(p) => p.$size}px;
`;

const TrayEdge = styled.div`
  width: 14px;
  background: linear-gradient(90deg, transparent 8px, #4a4a4a 8px, #4a4a4a 9px, transparent 9px);
`;

const ContextMenu = styled.div`
  position: absolute;
  left: 503px;
  top: 103px;
  width: 349px;
  height: 513px;
  padding: 4px 2px 0 3px;
  background: #f2f2f2;
  border: 1px solid #a0a0a0;
  box-shadow: 3px 3px 3px rgba(0, 0, 0, 0.35);
  color: #1a1a1a;
`;

const MenuItem = styled.div<{ $bold?: boolean; $active?: boolean }>`
  position: relative;
  height: 28px;
  padding-left: 9px;
  display: flex;
  align-items: center;
  gap: 10px;
  font-weight: ${(p) => (p.$bold ? 700 : 400)};
  background: ${(p) => (p.$active ? "#d8d8d8" : "transparent")};
  white-space: nowrap;
`;

const MenuIcon = styled.div`
  width: 20px;
  height: 20px;
  display: flex;
  align-items: center;
  justify-content: center;
`;

const MenuLabel = styled.div<{ $wide?: boolean }>`
  padding-bottom: 3px;
  letter-spacing: ${(p) => (p.$wide ? "0.2px" : "normal")};
`;

const MenuSub = styled.div`
  position: absolute;
  right: 10px;
  top: 6px;
  line-height: 0;
`;

const MenuSeparator = styled.div`
  height: 9px;
  margin: 0 10px 0 9px;
  background: linear-gradient(#a0a0a0, #a0a0a0) center / 100% 1px no-repeat;
`;

const Annotation = styled.svg`
  position: absolute;
  left: 0;
  top: 0;
  pointer-events: none;
`;

const RedBox = styled.div`
  position: absolute;
  left: 502px;
  top: 569px;
  width: 154px;
  height: 56px;
  border: 10px solid #ed1c24;
`;

const OrangePill = styled.div`
  position: absolute;
  left: 107px;
  top: 2px;
  width: 61px;
  height: 10px;
  padding: 2px 0 0 3px;
  border: 2px solid #8f8f8f;
  border-radius: 5px;
  background: #fff;
`;

const OrangeBar = styled.div`
  width: 30px;
  height: 4px;
  background: #f58220;
  border-radius: 2px;
`;

const Watermark = styled.div`
  position: absolute;
  left: 1473px;
  top: 873px;
  width: 350px;
  font-family: "Liberation Sans", sans-serif;
  color: #fff;
  -webkit-text-stroke: 1.4px #dcdcdc;
  pointer-events: none;
`;

const WatermarkTop = styled.div`
  display: flex;
  align-items: flex-end;
  height: 112px;
`;

const WatermarkBig = styled.div`
  font-size: 78px;
  font-weight: 700;
  line-height: 84px;
  width: 112px;
`;

const WatermarkCn = styled.div`
  font-family: "Noto Sans CJK SC", sans-serif;
  font-size: 58px;
  font-weight: 700;
  line-height: 74px;
  white-space: nowrap;
`;

const WatermarkDu = styled.text`
  font-family: "Liberation Sans", sans-serif;
  font-size: 46px;
  fill: #fff;
  stroke: #dcdcdc;
  stroke-width: 1.2px;
`;

const WatermarkUrl = styled.div`
  font-size: 43px;
  line-height: 50px;
  margin-top: 3px;
  white-space: nowrap;
`;
